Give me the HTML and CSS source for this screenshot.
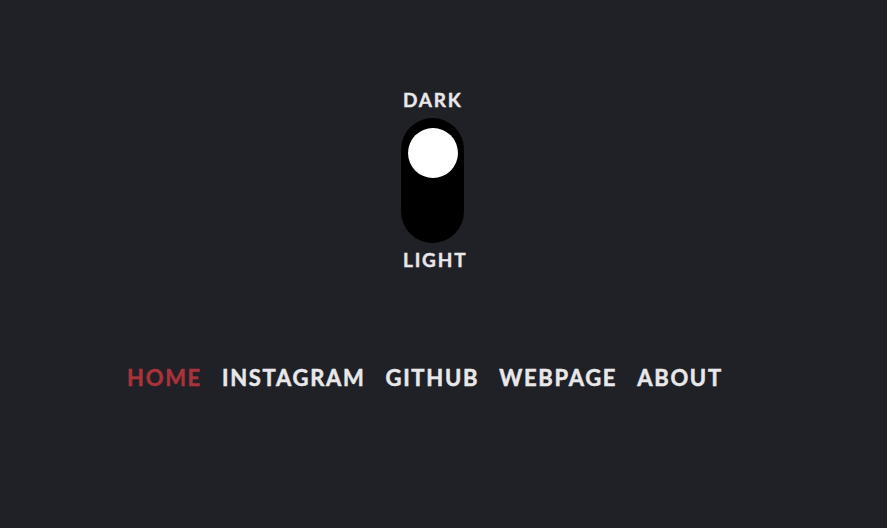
FILE: index.html
```html
<!DOCTYPE html>
<html lang="en">
<head>
<meta charset="utf-8">
<title>Theme toggle</title>
<link rel="stylesheet" href="styles.css">
</head>
<body>
<main class="page">
  <section class="theme">
    <span class="theme-label">DARK</span>
    <button class="toggle" aria-label="Toggle theme"><span class="knob"></span></button>
    <span class="theme-label">LIGHT</span>
  </section>
  <nav class="menu">
    <a class="menu-item active" href="#">HOME</a>
    <a class="menu-item" href="#">INSTAGRAM</a>
    <a class="menu-item" href="#">GITHUB</a>
    <a class="menu-item" href="#">WEBPAGE</a>
    <a class="menu-item" href="#">ABOUT</a>
  </nav>
</main>
</body>
</html>
```

FILE: styles.css
```css
html, body {
  margin: 0;
  padding: 0;
  height: 100%;
  background: #202027;
}
body {
  font-family: Lato, "Open Sans", "DejaVu Sans", sans-serif;
  font-weight: 700;
  color: #e8e8ea;
}
.page {
  display: flex;
  flex-direction: column;
}
.theme {
  display: flex;
  flex-direction: column;
  align-items: flex-start;
  width: 63px;
  margin-left: 401px;
  padding-top: 90px;
}
.theme-label {
  margin-left: 2px;
  font-size: 19px;
  line-height: 20px;
  letter-spacing: 1.8px;
  -webkit-text-stroke: 0.4px currentColor;
}
.toggle {
  display: flex;
  align-items: flex-start;
  width: 63px;
  height: 125px;
  margin: 8px 0 7px;
  padding: 10px 0 0 7px;
  border: 0;
  border-radius: 32px;
  background: #000;
  box-sizing: border-box;
}
.knob {
  width: 50px;
  height: 50px;
  border-radius: 50%;
  background: #fff;
}
.menu {
  display: flex;
  gap: 20px;
  margin-top: 95px;
  padding-left: 127px;
}
.menu-item {
  font-size: 22px;
  line-height: 26px;
  letter-spacing: 1.7px;
  color: #e8e8ea;
  text-decoration: none;
  -webkit-text-stroke: 0.5px currentColor;
}
.menu-item.active {
  color: #a8333a;
}
```
